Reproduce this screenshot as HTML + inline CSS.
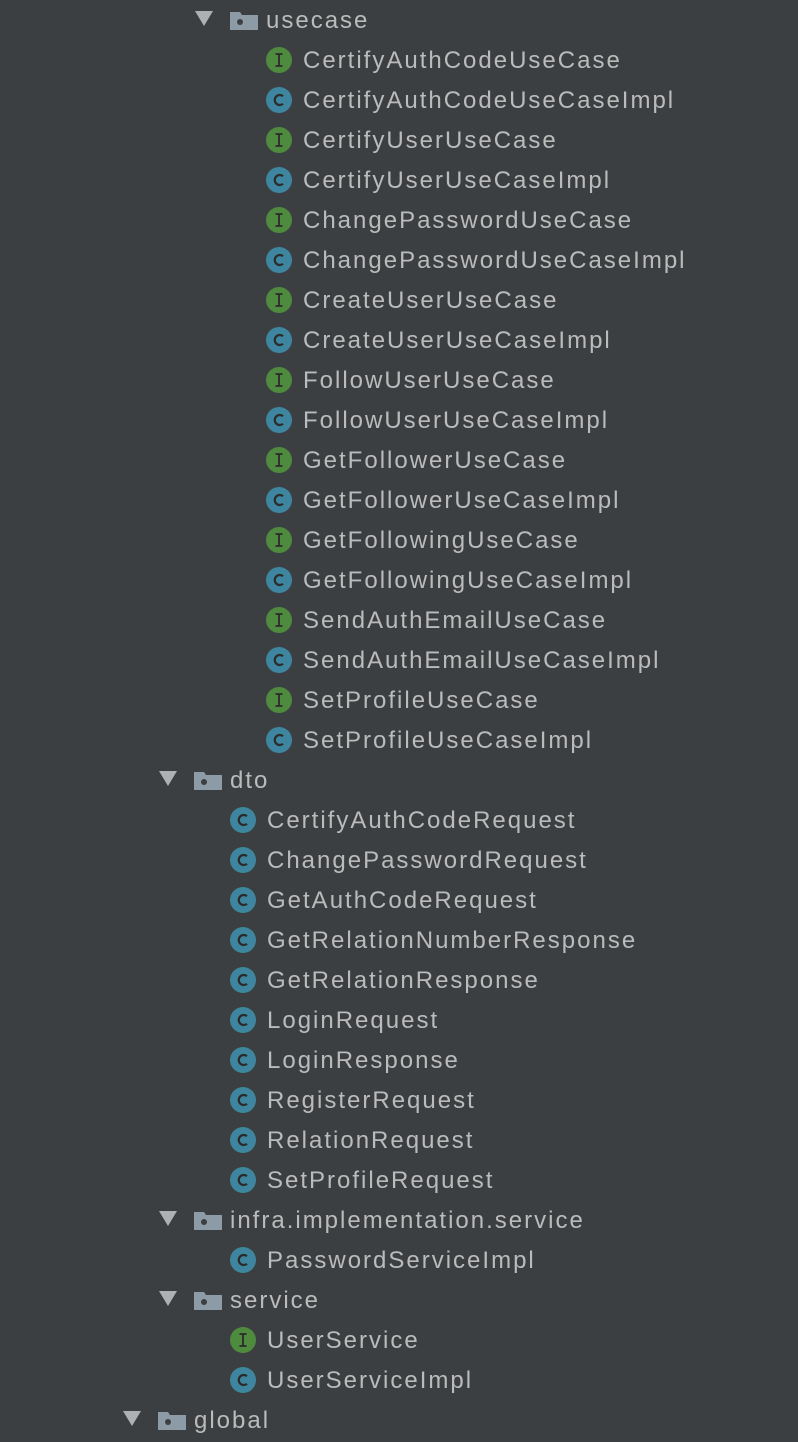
<!DOCTYPE html>
<html><head><meta charset="utf-8"><style>
html,body{margin:0;padding:0;background:#3c3f41;width:798px;height:1442px;overflow:hidden}
.r{position:absolute;height:40px;line-height:40px;font-family:"Liberation Sans",sans-serif;font-size:24px;letter-spacing:2px;color:#bbbbbb;white-space:nowrap}
.r svg{position:absolute;top:0}
.t{position:absolute;top:1px}
</style></head><body>
<div id="c"></div>
<script>
var rows=[
[1,'usecase'],
[2,'I','CertifyAuthCodeUseCase'],[2,'C','CertifyAuthCodeUseCaseImpl'],
[2,'I','CertifyUserUseCase'],[2,'C','CertifyUserUseCaseImpl'],
[2,'I','ChangePasswordUseCase'],[2,'C','ChangePasswordUseCaseImpl'],
[2,'I','CreateUserUseCase'],[2,'C','CreateUserUseCaseImpl'],
[2,'I','FollowUserUseCase'],[2,'C','FollowUserUseCaseImpl'],
[2,'I','GetFollowerUseCase'],[2,'C','GetFollowerUseCaseImpl'],
[2,'I','GetFollowingUseCase'],[2,'C','GetFollowingUseCaseImpl'],
[2,'I','SendAuthEmailUseCase'],[2,'C','SendAuthEmailUseCaseImpl'],
[2,'I','SetProfileUseCase'],[2,'C','SetProfileUseCaseImpl'],
[0,'dto'],
[1,'C','CertifyAuthCodeRequest'],[1,'C','ChangePasswordRequest'],[1,'C','GetAuthCodeRequest'],
[1,'C','GetRelationNumberResponse'],[1,'C','GetRelationResponse'],[1,'C','LoginRequest'],
[1,'C','LoginResponse'],[1,'C','RegisterRequest'],[1,'C','RelationRequest'],[1,'C','SetProfileRequest'],
[0,'infra.implementation.service'],
[1,'C','PasswordServiceImpl'],
[0,'service'],
[1,'I','UserService'],[1,'C','UserServiceImpl'],
[-1,'global']
];
var h='';
rows.forEach(function(r,i){
  var top=i*40;
  if(r.length==2){
    var tx=158+36*r[0];
    h+='<div class="r" style="top:'+top+'px;left:0;width:798px">'+
    '<svg style="left:'+tx+'px" width="20" height="40"><polygon points="1,11 19,11 10,26" fill="#aeb1b4"/></svg>'+
    '<svg style="left:'+(tx+36)+'px" width="28" height="40"><path d="M0,12 H10 L12,15 H28 V30 H0 Z" fill="#8c9ba5"/><circle cx="10" cy="22" r="3" fill="#3c3f41"/></svg>'+
    '<span class="t" style="left:'+(tx+72)+'px">'+r[1]+'</span></div>';
  } else {
    var ix=194+36*r[0];
    var g=r[1]=='I';
    var ic=g?'<circle cx="13" cy="20" r="13" fill="#4e8b3e"/><path d="M9.5,14 H16.5 M9.5,26 H16.5 M13,14 V26" stroke="#2b2b2b" stroke-width="1.8" fill="none"/>'
           :'<circle cx="13" cy="20" r="13" fill="#3e86a0"/><path d="M17,16.2 A5,5 0 1 0 17,23.8" stroke="#2b2b2b" stroke-width="2.2" fill="none"/>';
    h+='<div class="r" style="top:'+top+'px;left:0;width:798px">'+
    '<svg style="left:'+ix+'px" width="26" height="40">'+ic+'</svg>'+
    '<span class="t" style="left:'+(ix+37)+'px">'+r[2]+'</span></div>';
  }
});
document.getElementById('c').innerHTML=h;
</script>
</body></html>
